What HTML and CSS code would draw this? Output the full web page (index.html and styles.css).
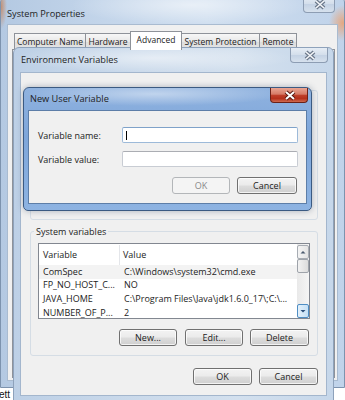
FILE: index.html
```html
<!DOCTYPE html>
<html>
<head>
<meta charset="utf-8">
<link rel="stylesheet" href="styles.css">
</head>
<body>
<div class="screen">
  <div class="win sys">
    <div class="titlebar">
      <span class="title">System Properties</span>
      <span class="close close-sys">
        <svg width="32" height="17" viewBox="0 0 32 17"><path d="M12 5 L20 12 M20 5 L12 12" stroke="#6d7a8c" stroke-width="4"/><path d="M12 5 L20 12 M20 5 L12 12" stroke="#f4f6f9" stroke-width="1.6"/></svg>
      </span>
    </div>
    <div class="client sys-client">
      <div class="tabs">
        <span class="tab t1">Computer Name</span>
        <span class="tab t2">Hardware</span>
        <span class="tab t3 selected">Advanced</span>
        <span class="tab t4">System Protection</span>
        <span class="tab t5">Remote</span>
      </div>
      <div class="tabpanel"></div>
    </div>
  </div>

  <div class="win env">
    <div class="titlebar">
      <span class="title">Environment Variables</span>
      <span class="close close-inactive">
        <svg width="38" height="15" viewBox="0 0 38 15"><path d="M15 4 L23 11 M23 4 L15 11" stroke="#6d7a8c" stroke-width="4"/><path d="M15 4 L23 11 M23 4 L15 11" stroke="#f4f6f9" stroke-width="1.6"/></svg>
      </span>
    </div>
    <div class="client env-client">
      <div class="group user-group"></div>
      <div class="group sys-group">
        <span class="group-label">System variables</span>
        <div class="listbox">
          <div class="lv">
            <div class="lv-row lv-head"><span class="c1">Variable</span><span class="c2">Value</span></div>
            <div class="lv-row hot"><span class="c1">ComSpec</span><span class="c2">C:\Windows\system32\cmd.exe</span></div>
            <div class="lv-row"><span class="c1">FP_NO_HOST_C...</span><span class="c2">NO</span></div>
            <div class="lv-row"><span class="c1">JAVA_HOME</span><span class="c2">C:\Program Files\Java\jdk1.6.0_17\;C:\...</span></div>
            <div class="lv-row"><span class="c1">NUMBER_OF_P...</span><span class="c2">2</span></div>
          </div>
          <div class="scrollbar">
            <span class="sb-btn"><svg width="10" height="12" viewBox="0 0 10 12"><path d="M2.5 7.5 L5 5 L7.5 7.5 Z" fill="#4b5a6e"/></svg></span>
            <span class="sb-thumb"></span>
            <span class="sb-track"></span>
            <span class="sb-btn hover"><svg width="10" height="12" viewBox="0 0 10 12"><path d="M2.5 5 L5 7.5 L7.5 5 Z" fill="#2b4f7a"/></svg></span>
          </div>
        </div>
        <div class="btn-row">
          <span class="btn w58">New...</span>
          <span class="btn w58">Edit...</span>
          <span class="btn w59">Delete</span>
        </div>
      </div>
      <div class="btn-row dlg-row">
        <span class="btn w59">OK</span>
        <span class="btn w59">Cancel</span>
      </div>
    </div>
  </div>

  <div class="win nuv">
    <div class="titlebar">
      <span class="title">New User Variable</span>
      <span class="close close-active">
        <svg width="38" height="15" viewBox="0 0 38 15"><path d="M15 4 L23 11 M23 4 L15 11" stroke="#5a1a12" stroke-width="4"/><path d="M15 4 L23 11 M23 4 L15 11" stroke="#ffffff" stroke-width="2"/></svg>
      </span>
    </div>
    <div class="client nuv-client">
      <div class="field">
        <span class="field-label">Variable name:</span>
        <span class="input focus"><span class="caret"></span></span>
      </div>
      <div class="field">
        <span class="field-label">Variable value:</span>
        <span class="input"></span>
      </div>
      <div class="btn-row nuv-row">
        <span class="btn disabled w58">OK</span>
        <span class="btn w60">Cancel</span>
      </div>
    </div>
  </div>

  <div class="stray">ett</div>
</div>
</body>
</html>
```

FILE: styles.css
```css
* { box-sizing: border-box; }
html, body { margin: 0; padding: 0; }
body {
  width: 345px;
  height: 400px;
  overflow: hidden;
  background: #ffffff;
  font-family: "Open Sans", "Noto Sans", sans-serif;
  font-size: 9px;
  color: #1c1c1c;
}
.screen { position: relative; width: 345px; height: 400px; overflow: hidden; }

/* ---------- windows ---------- */
.win {
  position: absolute;
  display: flex;
  flex-direction: column;
  border-radius: 6px 6px 0 0;
}
.titlebar {
  display: flex;
  align-items: flex-start;
  flex: none;
}
.title { white-space: nowrap; line-height: 14px; color: #1e1e1e; font-size: 9.2px; }
.close { margin-left: auto; display: block; flex: none; }
.close svg { display: block; }
.client { background: #f0f0f0; display: flex; flex-direction: column; }

/* System Properties */
.sys {
  left: 0; top: -4px; width: 345px; height: 392px;
  border: 1px solid #7d93ae;
  padding: 0 6px 6px 6px;
  background:
    radial-gradient(ellipse 14px 18px at 342px 26px, rgba(236,160,110,0.85), rgba(236,160,110,0) 100%),
    radial-gradient(ellipse 6px 22px at 0px 10px, rgba(200,120,70,0.7), rgba(200,120,70,0) 100%),
    radial-gradient(ellipse 120px 20px at 190px 8px, rgba(255,255,255,0.55), rgba(255,255,255,0)),
    linear-gradient(90deg, #b4c9e2 0, #c3d5ea 30%, #cfdeef 60%, #c0d3ea 100%);
}
.sys .titlebar { height: 27px; }
.sys .title { padding-top: 10px; }
.close-sys {
  width: 32px; height: 17px; margin-right: 3px; margin-top: -1px;
  border: 1px solid #8d9db3; border-top: none;
  border-radius: 0 0 4px 4px;
  background: linear-gradient(#e6edf5, #d3deeb 50%, #c4d2e4 51%, #d6e1ed);
}
.sys-client {
  flex: 1;
  padding: 5px 2px 2px 4px;
  background: #f0f0f0;
  border: 1px solid #a9bbd0;
}
.tabs {
  display: flex;
  align-items: flex-end;
  height: 19px;
  margin-left: 2px;
  flex: none;
  font-size: 8.5px;
}
.tab {
  height: 16px;
  border: 1px solid #8e9299;
  border-bottom: none;
  border-left: none;
  background: linear-gradient(#f7f7f7, #e8e8e8 50%, #dcdcdc 51%, #e4e4e4);
  text-align: center;
  line-height: 15px;
  white-space: nowrap;
}
.tab.t1 { width: 72px; border-left: 1px solid #8e9299; }
.tab.t2 { width: 45px; }
.tab.t3 { width: 52px; }
.tab.t4 { width: 78px; }
.tab.t5 { width: 37px; }
.tab.selected {
  height: 19px;
  background: #ffffff;
  line-height: 15px;
  position: relative;
  z-index: 1;
  margin-bottom: -1px;
  border-left: 1px solid #8e9299;
  margin-left: -1px;
}
.tabpanel {
  flex: 1;
  background: #ffffff;
  border: 1px solid #8e9299;
}

/* Environment Variables */
.env {
  left: 13px; top: 47px; width: 321px; height: 356px;
  border: 1px solid #8ea2bb;
  padding: 0 6px 6px 6px;
  background:
    radial-gradient(ellipse 140px 14px at 140px 10px, rgba(255,255,255,0.5), rgba(255,255,255,0)),
    linear-gradient(90deg, #bdd0e6, #cbdaeb 40%, #d3e0ee 70%, #c6d7ea);
}
.env .titlebar { height: 24px; }
.env .title { padding: 5px 0 0 1px; }
.close-inactive {
  width: 38px; height: 15px; margin-right: -1px;
  border: 1px solid #8d9db3; border-top: none;
  border-radius: 0 0 4px 4px;
  background: linear-gradient(#e6edf5, #d3deeb 50%, #c4d2e4 51%, #d6e1ed);
}
.env-client {
  flex: 1;
  border: 1px solid #a3b6cd;
  padding: 17px 8px 0 9px;
}
.group {
  border: 1px solid #d5dde5;
  border-radius: 3px;
  flex: none;
}
.user-group { height: 130px; }
.sys-group {
  margin-top: 11px;
  display: flex;
  flex-direction: column;
  padding: 0 7px 9px 7px;
}
.group-label {
  align-self: flex-start;
  margin: -7px 0 0 -4px;
  padding: 0 2px;
  line-height: 13px;
  background: #f0f0f0;
}
.listbox {
  margin-top: 5px;
  height: 76px;
  border: 1px solid #828790;
  background: #ffffff;
  display: flex;
  overflow: hidden;
}
.lv { flex: 1; display: flex; flex-direction: column; overflow: hidden; }
.lv-row { display: flex; height: 13.67px; line-height: 12px; align-items: center; white-space: nowrap; flex: none; }
.lv-row.hot { background: #f3f3f3; }
.lv-head { height: 21px; }
.c1 { width: 81px; padding-left: 4px; overflow: hidden; flex: none; }
.c2 { padding-left: 4px; overflow: hidden; flex: 1; }
.lv-head .c1 { border-right: 1px solid #e4e6ea; line-height: 20px; }
.lv-head .c2 { padding-left: 3px; }
.scrollbar {
  width: 12px;
  flex: none;
  display: flex;
  flex-direction: column;
  background: linear-gradient(90deg, #e9e9e9, #f5f5f5);
  padding: 1px 0 0 0;
}
.sb-btn {
  height: 14px;
  border: 1px solid #a7acb3;
  border-radius: 2px;
  background: linear-gradient(90deg, #f4f4f4, #e4e4e4);
  display: flex; align-items: center; justify-content: center;
  flex: none;
}
.sb-btn svg { display: block; }
.sb-btn.hover {
  border-color: #4f8ec4;
  background: linear-gradient(90deg, #e4f1fb, #c5e0f6);
}
.sb-thumb {
  height: 14px;
  border: 1px solid #9ea3aa;
  border-radius: 2px;
  background: linear-gradient(90deg, #f2f2f2, #dcdcdc);
  flex: none;
}
.sb-track { flex: 1; }

.btn-row {
  display: flex;
  justify-content: flex-end;
  gap: 7px;
  margin-top: 10px;
  flex: none;
}
.sys-group .btn-row { margin-right: 1px; }
.sys-group .btn-row .btn:first-child { margin-right: 1px; }
.dlg-row { margin-top: 12px; }
.btn {
  height: 17px;
  border: 1px solid #707070;
  border-radius: 3px;
  background: linear-gradient(#f3f3f3, #ebebeb 48%, #dddddd 52%, #cfcfcf);
  box-shadow: inset 0 0 0 1px rgba(255,255,255,0.75);
  text-align: center;
  line-height: 15px;
  color: #1c1c1c;
}
.btn.disabled {
  border-color: #b3b6b9;
  background: #f4f4f4;
  box-shadow: none;
  color: #8a8a8a;
}
.w58 { width: 58px; }
.w59 { width: 59px; }
.w60 { width: 60px; }

/* New User Variable (active) */
.nuv {
  left: 23px; top: 87px; width: 289px; height: 124px;
  border: 1px solid #3b5a82;
  border-radius: 6px 6px 5px 5px;
  padding: 0 4px 6px 4px;
  background:
    radial-gradient(ellipse 130px 12px at 130px 6px, rgba(255,255,255,0.45), rgba(255,255,255,0)),
    linear-gradient(#8fb2df, #7ea6da 40%, #8db3e2 100%);
  box-shadow: 0 0 6px rgba(40,60,90,0.35);
}
.nuv .titlebar { height: 22px; }
.nuv .title { padding: 4px 0 0 2px; }
.close-active {
  width: 38px; height: 15px; margin-right: -1px;
  border: 1px solid #6b2117; border-top: none;
  border-radius: 0 0 4px 4px;
  background: linear-gradient(#eaa593, #d57a66 45%, #c0402b 50%, #b5311c 75%, #cf6a4f);
}
.nuv-client {
  flex: 1;
  border: 1px solid #5d7ea8;
  padding: 16px 8px 0 9px;
}
.field { display: flex; align-items: center; height: 16px; flex: none; }
.field + .field { margin-top: 8px; }
.field-label { width: 84px; flex: none; white-space: nowrap; }
.input {
  flex: 1;
  height: 16px;
  background: #ffffff;
  border: 1px solid #c8ccd3;
  border-top-color: #abadb3;
  border-radius: 2px;
  display: flex; align-items: center;
}
.input.focus { border-color: #9dbad9; border-top-color: #7fa2c9; }
.caret { width: 1px; height: 9px; background: #000; margin-left: 3px; }
.nuv-row { margin-top: 10px; margin-right: 1px; }

.stray {
  position: absolute;
  left: -1px; top: 389px;
  font-family: "Liberation Sans", Arial, sans-serif;
  font-size: 10px;
  line-height: 11px;
  color: #111;
}
```
